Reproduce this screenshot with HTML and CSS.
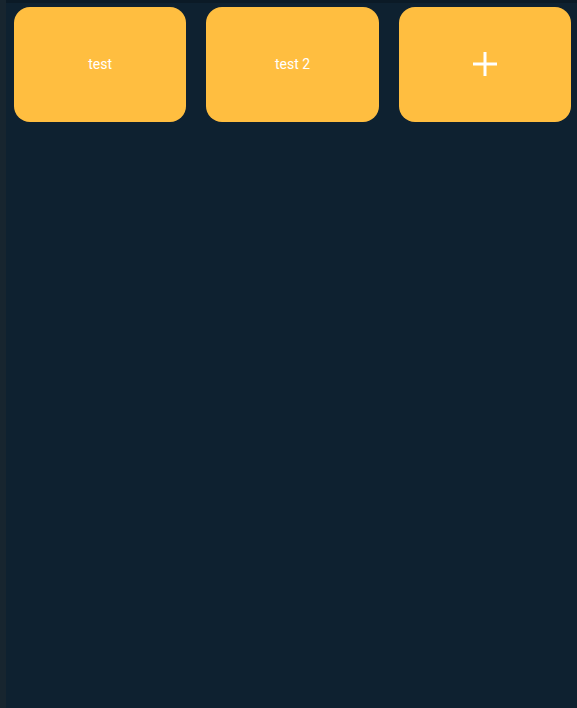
FILE: index.html
```html
<!DOCTYPE html>
<html>
<head>
<meta charset="utf-8">
<link rel="stylesheet" href="styles.css">
</head>
<body>
<div class="app">
  <aside class="rail"></aside>
  <main class="main">
    <div class="topbar"></div>
    <div class="grid">
      <div class="card"><span>test</span></div>
      <div class="card"><span>test 2</span></div>
      <div class="card add">
        <svg width="24" height="24" viewBox="0 0 24 24"><path d="M12 0v24M0 12h24" stroke="#fff" stroke-width="3" fill="none"/></svg>
      </div>
    </div>
  </main>
</div>
</body>
</html>
```
FILE: styles.css
```css
html, body {
  margin: 0;
  padding: 0;
  height: 100%;
}
body {
  background: #0e2130;
  font-family: Roboto, "Liberation Sans", sans-serif;
}
.app {
  display: flex;
  height: 708px;
}
.rail {
  width: 6px;
  flex: none;
  background: #17252f;
}
.main {
  flex: 1;
  display: flex;
  flex-direction: column;
}
.topbar {
  height: 3px;
  background: #0b1a26;
}
.grid {
  display: grid;
  grid-template-columns: repeat(3, 1fr);
  column-gap: 20px;
  padding: 4px 6px 0 8px;
}
.card {
  height: 115px;
  border-radius: 16px;
  background: #ffbe40;
  display: flex;
  align-items: center;
  justify-content: center;
  color: #fff;
  font-size: 14px;
}
.card span {
  margin-bottom: 2px;
}
.add svg {
  margin-bottom: 1px;
}
```
